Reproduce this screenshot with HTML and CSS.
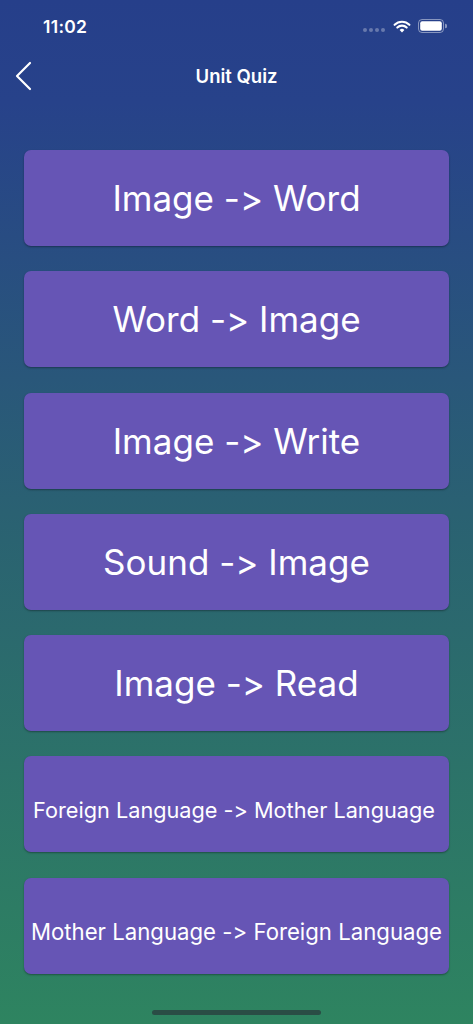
FILE: index.html
```
<!DOCTYPE html>
<html>
<head>
<meta charset="utf-8">
<link rel="stylesheet" href="styles.css">
</head>
<body>
<div class="screen">
  <div class="status">
    <span class="time">11:02</span>
    <div class="status-icons">
      <span class="dots"><i></i><i></i><i></i><i></i></span>
      <svg class="wifi" width="18" height="13" viewBox="0 0 18 13">
        <path d="M9 12.5 L6.6 9.9 A3.4 3.4 0 0 1 11.4 9.9 Z" fill="#fff"/>
        <path d="M4.3 7.6 A6.6 6.6 0 0 1 13.7 7.6" fill="none" stroke="#fff" stroke-width="2.1" stroke-linecap="round"/>
        <path d="M1.6 4.8 A10.5 10.5 0 0 1 16.4 4.8" fill="none" stroke="#fff" stroke-width="2.1" stroke-linecap="round"/>
      </svg>
      <svg class="battery" width="29" height="14" viewBox="0 0 29 14">
        <rect x="0.5" y="0.5" width="25" height="13" rx="3.5" fill="none" stroke="rgba(255,255,255,0.45)" stroke-width="1"/>
        <rect x="2.2" y="2.2" width="21.6" height="9.6" rx="2" fill="#fff"/>
        <path d="M27 4.8 A2 2 0 0 1 27 9.2 Z" fill="rgba(255,255,255,0.45)"/>
      </svg>
    </div>
  </div>
  <div class="nav">
    <svg class="back" width="20" height="30" viewBox="0 0 20 30">
      <path d="M16 2 L3 15 L16 28" fill="none" stroke="#fff" stroke-width="2.2" stroke-linecap="round" stroke-linejoin="round"/>
    </svg>
    <span class="title">Unit Quiz</span>
  </div>
  <div class="list">
    <div class="btn big">Image -&gt; Word</div>
    <div class="btn big">Word -&gt; Image</div>
    <div class="btn big">Image -&gt; Write</div>
    <div class="btn big">Sound -&gt; Image</div>
    <div class="btn big">Image -&gt; Read</div>
    <div class="btn small left">Foreign Language -&gt; Mother Language</div>
    <div class="btn small wide">Mother Language -&gt; Foreign Language</div>
  </div>
  <div class="home-bar"></div>
</div>
</body>
</html>
```
FILE: styles.css
```
html, body {
  margin: 0;
  padding: 0;
}
body {
  font-family: Inter, "Noto Sans", "Liberation Sans", sans-serif;
  font-feature-settings: "calt" 0, "liga" 0;
  font-variant-ligatures: none;
  color: #fff;
}
.screen {
  width: 473px;
  height: 1024px;
  background: linear-gradient(180deg, #263f8a 0%, #27428a 10%, #2a6172 50%, #2e8460 100%);
  display: flex;
  flex-direction: column;
  position: relative;
  overflow: hidden;
}
.status {
  height: 52px;
  display: flex;
  align-items: center;
  justify-content: space-between;
  padding: 0 26px 0 43px;
  box-sizing: border-box;
}
.time {
  font-size: 17.5px;
  font-weight: 600;
  letter-spacing: 0.3px;
}
.status-icons {
  display: flex;
  align-items: center;
  gap: 7px;
}
.dots {
  display: flex;
  gap: 2px;
  margin-top: 7px;
  margin-right: 1px;
}
.dots i {
  width: 4px;
  height: 4px;
  border-radius: 50%;
  background: rgba(255,255,255,0.3);
}
.nav {
  height: 46px;
  display: flex;
  align-items: center;
  justify-content: center;
  position: relative;
}
.back {
  position: absolute;
  left: 14px;
  top: 9px;
}
.title {
  font-size: 18.5px;
  font-weight: 600;
  margin-top: 2px;
}
.list {
  display: flex;
  flex-direction: column;
  gap: 25.3px;
  padding: 52px 24px 0;
}
.btn {
  height: 96px;
  background: #6655b5;
  border-radius: 7px;
  box-shadow: 0 1px 2px rgba(0,0,0,0.35);
  display: flex;
  align-items: center;
  justify-content: center;
  white-space: nowrap;
  box-sizing: border-box;
}
.big {
  font-size: 35px;
}
.small {
  font-size: 21.7px;
  padding-top: 12px;
}
.small.left {
  padding-right: 5px;
}
.small.wide {
  font-size: 22.2px;
}
.home-bar {
  position: absolute;
  left: 152px;
  bottom: 9px;
  width: 169px;
  height: 5px;
  border-radius: 3px;
  background: #2a4d45;
}
```
